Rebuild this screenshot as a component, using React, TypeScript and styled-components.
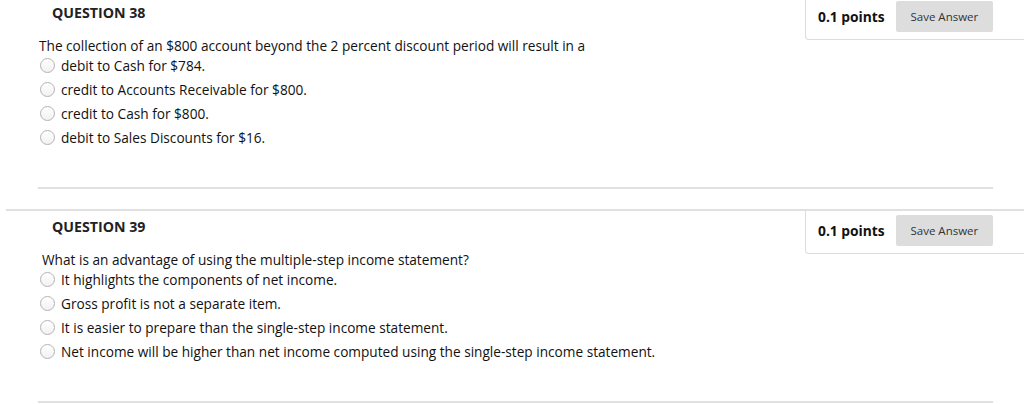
import React from 'react';
import styled, { createGlobalStyle } from 'styled-components';

const GlobalStyle = createGlobalStyle`
    html, body {
        margin: 0;
        padding: 0;
        background: #ffffff;
        overflow: hidden;
    }
    body {
        font-family: 'Open Sans', 'Liberation Sans', Arial, sans-serif;
        color: #111111;
    }
`;

const Page = styled.div`
    width: 1024px;
    margin-top: -5px;
`;

const Block = styled.div`
    margin-left: 6px;
    height: 214px;
    border-top: 2px solid #e0e0e0;
    box-sizing: border-box;
    display: flex;
    flex-direction: column;
`;

const Header = styled.div`
    display: flex;
    align-items: flex-start;
    height: 41px;
    flex-shrink: 0;
`;

const Title = styled.h3`
    margin: 0;
    padding: 6px 0 0 46px;
    font-size: 14.2px;
    line-height: 20px;
    font-weight: 700;
    color: #222222;
`;

const PointsBox = styled.div`
    margin-left: auto;
    width: 219px;
    height: 43px;
    box-sizing: border-box;
    display: flex;
    align-items: center;
    gap: 11px;
    padding: 0 31px 4px 12px;
    border-left: 1px solid #dcdcdc;
    border-bottom: 1px solid #dcdcdc;
    border-bottom-left-radius: 4px;
`;

const Points = styled.span`
    font-size: 13.8px;
    font-weight: 700;
    color: #111111;
    white-space: nowrap;
`;

const SaveButton = styled.button`
    width: 98px;
    height: 31px;
    border: none;
    border-radius: 2px;
    background-color: #dddddd;
    color: #333333;
    font-family: 'Open Sans', 'Liberation Sans', Arial, sans-serif;
    font-size: 11.5px;
    padding: 0;
`;

type indent = {
    left: number;
};
const QuestionText = styled.p<indent>`
    margin: 0;
    padding-left: ${(props) => props.left}px;
    font-size: 13.65px;
    line-height: 16px;
`;

const Options = styled.ul`
    list-style: none;
    margin: -1px 0 0;
    padding: 0 0 0 34px;
`;

const Option = styled.li`
    display: flex;
    align-items: center;
    height: 24px;
    font-size: 13.65px;
    color: #111111;
`;

const Radio = styled.span`
    width: 13px;
    height: 13px;
    border-radius: 50%;
    border: 1px solid #b4b4b4;
    background: linear-gradient(#ffffff, #f1f1f1);
    margin-right: 6px;
    flex-shrink: 0;
`;

const Separator = styled.div`
    margin: auto 31px 20px 32px;
    border-top: 2px solid #e0e0e0;
`;

type question = {
    num: number;
    text: string;
    textLeft: number;
    options: string[];
};

const questions: question[] = [
    {
        num: 38,
        text: 'The collection of an $800 account beyond the 2 percent discount period will result in a',
        textLeft: 33,
        options: [
            'debit to Cash for $784.',
            'credit to Accounts Receivable for $800.',
            'credit to Cash for $800.',
            'debit to Sales Discounts for $16.',
        ],
    },
    {
        num: 39,
        text: 'What is an advantage of using the multiple-step income statement?',
        textLeft: 36,
        options: [
            'It highlights the components of net income.',
            'Gross profit is not a separate item.',
            'It is easier to prepare than the single-step income statement.',
            'Net income will be higher than net income computed using the single-step income statement.',
        ],
    },
];

export default function App() {
    return (
        <>
            <GlobalStyle />
            <Page>
                {questions.map((q) => (
                    <Block key={q.num}>
                        <Header>
                            <Title>QUESTION {q.num}</Title>
                            <PointsBox>
                                <Points>0.1 points</Points>
                                <SaveButton>Save Answer</SaveButton>
                            </PointsBox>
                        </Header>
                        <QuestionText left={q.textLeft}>{q.text}</QuestionText>
                        <Options>
                            {q.options.map((o) => (
                                <Option key={o}>
                                    <Radio />
                                    {o}
                                </Option>
                            ))}
                        </Options>
                        <Separator />
                    </Block>
                ))}
            </Page>
        </>
    );
}
